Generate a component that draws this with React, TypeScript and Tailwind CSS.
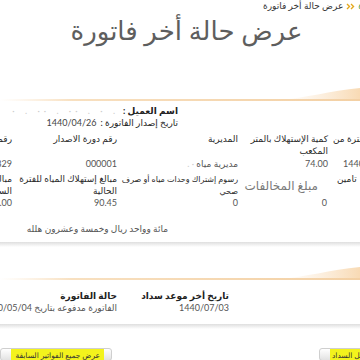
import React from "react";

// columns listed left to right (the page is cropped on both sides)
const cols = [
  { w: "w-[62px]", dir: "rtl" as const },
  { w: "w-[105px]", dir: "rtl" as const },
  { w: "w-[121px]", dir: "rtl" as const },
  { w: "w-[92px]", dir: "rtl" as const },
  { w: "w-[38px]", dir: "ltr" as const },
];

function CardEdge({ id }: { id: string }) {
  return (
    <svg width="360" height="16" viewBox="0 0 360 16" className="block">
      <defs>
        <linearGradient id={id + "l"} x1="0" x2="1">
          <stop offset="0" stopColor="#fbe6cc" stopOpacity="0" />
          <stop offset="0.2" stopColor="#f8e0c0" />
          <stop offset="1" stopColor="#f3d0a4" />
        </linearGradient>
        <linearGradient id={id + "s"} x1="0" x2="1">
          <stop offset="0" stopColor="#fbe7cf" stopOpacity="0" />
          <stop offset="1" stopColor="#f8dab4" />
        </linearGradient>
      </defs>
      <path d="M280 14 C 305 12, 330 5, 360 2 L360 14 Z" fill={`url(#${id}s)`} />
      <rect x="0" y="13" width="360" height="2" fill={`url(#${id}l)`} />
    </svg>
  );
}

function Shadow() {
  return <div className="h-[5px] bg-gradient-to-b from-[#dedede] to-white" />;
}

function Row({ items, h }: { items: React.ReactNode[]; h: string }) {
  return (
    <div dir="ltr" className={`flex ${h}`}>
      {items.map((it, i) => (
        <div
          key={i}
          dir={cols[i].dir}
          className={`${cols[i].w} shrink-0 ${cols[i].dir === "ltr" ? "text-left" : "text-right"}`}
        >
          {it}
        </div>
      ))}
    </div>
  );
}

function Chevrons() {
  return (
    <svg width="9" height="7" viewBox="0 0 9 7" className="mx-[3px]">
      <path d="M1 1 L3.5 3.5 L1 6 M5 1 L7.5 3.5 L5 6" fill="none" stroke="#e4a81c" strokeWidth="1.4" />
    </svg>
  );
}

export default function App() {
  return (
    <div
      dir="rtl"
      className="w-[360px] h-[360px] overflow-hidden bg-white text-[#444] font-['Lato','DejaVu_Sans',sans-serif]"
    >
      {/* breadcrumb */}
      <div className="h-[12px] flex items-center text-[9px] leading-[12px] text-[#333] -mr-[3px]">
        <span className="text-[#3c9a3c]">ة</span>
        <Chevrons />
        <span>عرض حالة أخر فاتورة</span>
      </div>

      <h1 className="h-[36px] pl-[13px] text-center text-[26px] leading-[36px] text-[#5e5e5e]">
        عرض حالة أخر فاتورة
      </h1>

      <div className="h-[38px]" />
      <CardEdge id="a" />

      {/* card 1 */}
      <div className="pt-[3px] text-[9px] leading-[12px]">
        <div className="pr-[182px] font-bold text-[#222] flex gap-[4px]">
          <span>اسم العميل :</span>
          <span className="text-[#ccc] font-normal tracking-[4px]">. · . ·· . ·· . ·</span>
        </div>
        <div className="pr-[182px] text-[#222] flex gap-[4px]">
          <span>تاريخ إصدار الفاتورة :</span>
          <span className="text-[#444]">1440/04/26</span>
        </div>

        <div className="w-[418px] -mr-[8px] mt-[4px] text-[#2a2a2a]">
          <Row
            h="h-[25px]"
            items={[
              <div className="whitespace-nowrap">رقم العداد</div>,
              <div>رقم دورة الاصدار</div>,
              <div>المديرية</div>,
              <div className="pr-[2px]">كمية الإستهلاك بالمتر المكعب</div>,
              <div className="pl-[3px] whitespace-nowrap">
                <bdi>الفترة من</bdi>
              </div>,
            ]}
          />
          <Row
            h="h-[15px] text-[#555]"
            items={[
              <div>10829</div>,
              <div>000001</div>,
              <div className="whitespace-nowrap">
                مديرية مياه <span className="text-[#ccc]">· .</span>
              </div>,
              <div className="pr-[2px]">74.00</div>,
              <div className="pl-[13px] whitespace-nowrap">1440/03/26</div>,
            ]}
          />
          <Row
            h="h-[24px]"
            items={[
              <div className="w-[24px] ml-auto">مبالغ السابقة</div>,
              <div className="pl-[4px]">مبالغ إستهلاك المياه للفترة الحالية</div>,
              <div className="-ml-[6px] text-[8px]">رسوم إشتراك وحدات مياه أو صرف صحي</div>,
              <div className="pr-[12px] pt-[6px] text-[12px] leading-[14px] text-[#7a7a7a] whitespace-nowrap">
                مبلغ المخالفات
              </div>,
              <div className="pl-[7px] whitespace-nowrap">
                <bdi>تامين</bdi>
              </div>,
            ]}
          />
          <Row
            h="h-[14px] text-[#555]"
            items={[
              <div>11.00</div>,
              <div>90.45</div>,
              <div>0</div>,
              <div className="pr-[3px]">0</div>,
              <span />,
            ]}
          />
        </div>

        <div className="pr-[192px] mt-[12px] text-[#555]">مائة وواحد ريال وخمسة وعشرون هلله</div>
        <div className="h-[7px]" />
      </div>
      <Shadow />

      <div className="h-[18px]" />
      <CardEdge id="b" />

      {/* card 2 */}
      <div className="pt-[9px] pb-[10px] flex pr-[131px] text-[9px] leading-[12px]">
        <div className="w-[112px] shrink-0">
          <div className="font-bold text-[#222] whitespace-nowrap">تاريخ أخر موعد سداد</div>
          <div className="text-[#555]">1440/07/03</div>
        </div>
        <div className="w-[130px] shrink-0">
          <div className="font-bold text-[#222]">حالة الفاتورة</div>
          <div className="text-[#555] whitespace-nowrap">الفاتورة مدفوعه بتاريخ 1440/05/04</div>
        </div>
      </div>
      <Shadow />

      {/* buttons */}
      <div dir="ltr" className="mt-[19px] flex items-start text-[7.5px] leading-[11px] text-[#333]">
        <button className="w-[112px] h-[13px] shrink-0 rounded-[3px] border border-[#cfcfcf] bg-gradient-to-b from-white to-[#e2e2e2] flex justify-end pr-[7px]">
          <span dir="rtl" className="bg-[#f3f31c] px-[4px] pt-[1px] pb-[6px] -mb-[6px] whitespace-nowrap">
            عرض جميع الفواتير السابقة
          </span>
        </button>
        <button className="ml-auto w-[70px] h-[13px] shrink-0 -mr-[29px] rounded-[3px] border border-[#cfcfcf] bg-gradient-to-b from-white to-[#e2e2e2] flex justify-start pl-[10px]">
          <span dir="rtl" className="bg-[#f3f31c] px-[2px] pt-[1px] pb-[6px] -mb-[6px] whitespace-nowrap">
            عرض تفاصيل السداد
          </span>
        </button>
      </div>
    </div>
  );
}
